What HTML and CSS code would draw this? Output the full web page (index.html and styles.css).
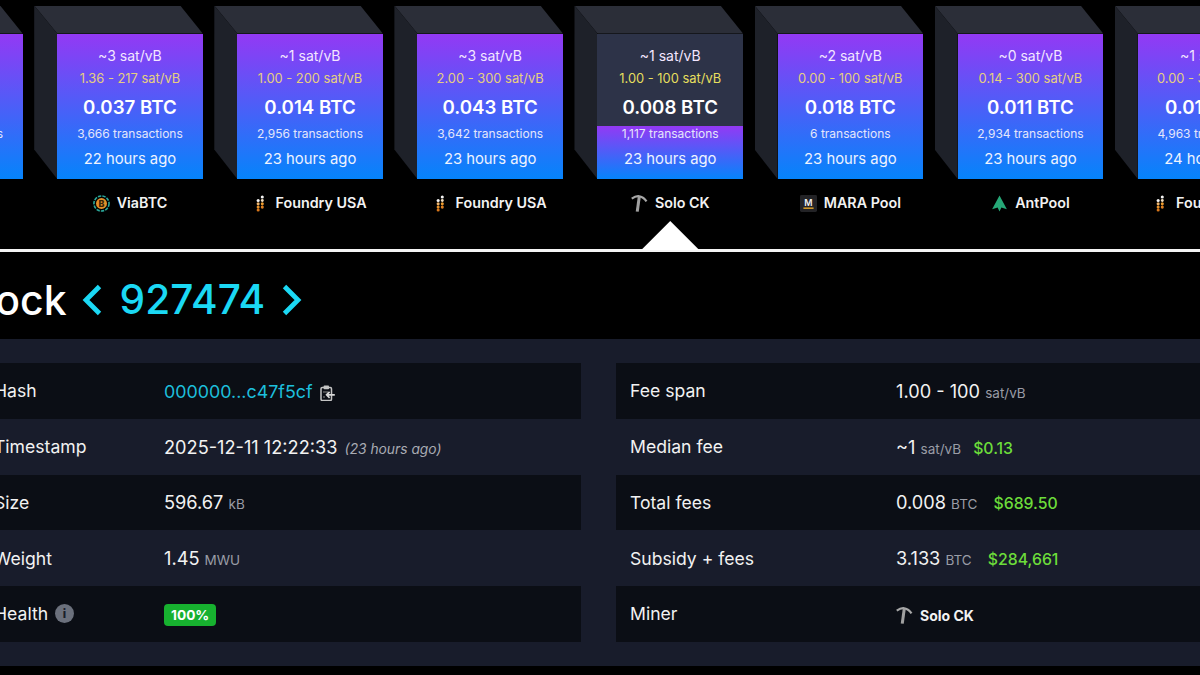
FILE: index.html
```html
<!DOCTYPE html>
<html>
<head>
  <meta charset="UTF-8">
  <title>Block 927474</title>
  <link rel="stylesheet" href="styles.css">
</head>
<body>
  <svg class="icon-defs" width="0" height="0">
    <symbol id="icon-via" viewBox="0 0 18 18">
      <circle cx="9" cy="9" r="8" fill="none" stroke="#2aa89a" stroke-width="1.7" stroke-dasharray="3.6 1.2"/>
      <circle cx="9" cy="9" r="5.8" fill="#e2902a"/>
      <text x="9" y="12.4" text-anchor="middle" class="icon-letter" fill="#3a2508">B</text>
    </symbol>
    <symbol id="icon-foundry" viewBox="0 0 10 18">
      <circle cx="7" cy="1.8" r="1.7" fill="#f4f4f4"/>
      <circle cx="2.4" cy="5.6" r="1.7" fill="#f4f4f4"/>
      <circle cx="7" cy="5.6" r="1.6" fill="#f0dcc0"/>
      <circle cx="2.4" cy="9.4" r="1.7" fill="#eab06a"/>
      <circle cx="7" cy="9.4" r="1.7" fill="#e8982e"/>
      <circle cx="2.4" cy="13" r="1.7" fill="#e8922a"/>
      <circle cx="7" cy="13" r="1.7" fill="#e08020"/>
      <circle cx="2.4" cy="16.3" r="1.7" fill="#d9761a"/>
    </symbol>
    <symbol id="icon-solo" viewBox="0 0 18 18">
      <path d="M.8 3.8C4 1.6 7 1 9 1.4 12 1.9 14.4 3.6 16.4 6.8" fill="none" stroke="#a8a8a8" stroke-width="2.3"/>
      <path d="M8.8 1.6 6.6 17.6" fill="none" stroke="#a0a0a0" stroke-width="3.2"/>
    </symbol>
    <symbol id="icon-mara" viewBox="0 0 18 18">
      <rect width="18" height="18" rx="1.5" fill="#232326"/>
      <text x="9" y="11.4" text-anchor="middle" class="icon-letter icon-thin" fill="#f2f2f2">M</text>
      <rect x="3.6" y="13.2" width="10.8" height="1.5" fill="#e3a52a"/>
    </symbol>
    <symbol id="icon-ant" viewBox="0 0 16 18">
      <path d="M8 .5 15.8 15 10 13.2 8 17.5 6 13.2 .2 15Z" fill="#26a877"/>
    </symbol>
  </svg>

  <div class="chain">
    <div class="block">
      <div class="block-front">
        <span class="fee">~2 sat/vB</span>
        <span class="span">1.00 - 99 sat/vB</span>
        <span class="reward">0.021 BTC</span>
        <span class="txs">3,204 transactions</span>
        <span class="age">22 hours ago</span>
      </div>
      <div class="pool"><svg class="logo logo-ant"><use href="#icon-ant"/></svg>AntPool</div>
    </div>
    <div class="block">
      <div class="block-front">
        <span class="fee">~3 sat/vB</span>
        <span class="span">1.36 - 217 sat/vB</span>
        <span class="reward">0.037 BTC</span>
        <span class="txs">3,666 transactions</span>
        <span class="age">22 hours ago</span>
      </div>
      <div class="pool"><svg class="logo"><use href="#icon-via"/></svg>ViaBTC</div>
    </div>
    <div class="block">
      <div class="block-front">
        <span class="fee">~1 sat/vB</span>
        <span class="span">1.00 - 200 sat/vB</span>
        <span class="reward">0.014 BTC</span>
        <span class="txs">2,956 transactions</span>
        <span class="age">23 hours ago</span>
      </div>
      <div class="pool"><svg class="logo logo-foundry"><use href="#icon-foundry"/></svg>Foundry USA</div>
    </div>
    <div class="block">
      <div class="block-front">
        <span class="fee">~3 sat/vB</span>
        <span class="span">2.00 - 300 sat/vB</span>
        <span class="reward">0.043 BTC</span>
        <span class="txs">3,642 transactions</span>
        <span class="age">23 hours ago</span>
      </div>
      <div class="pool"><svg class="logo logo-foundry"><use href="#icon-foundry"/></svg>Foundry USA</div>
    </div>
    <div class="block selected">
      <div class="block-front">
        <div class="fill" style="height: 36.5%"></div>
        <span class="fee">~1 sat/vB</span>
        <span class="span">1.00 - 100 sat/vB</span>
        <span class="reward">0.008 BTC</span>
        <span class="txs">1,117 transactions</span>
        <span class="age">23 hours ago</span>
      </div>
      <div class="pool"><svg class="logo"><use href="#icon-solo"/></svg>Solo CK</div>
    </div>
    <div class="block">
      <div class="block-front">
        <span class="fee">~2 sat/vB</span>
        <span class="span">0.00 - 100 sat/vB</span>
        <span class="reward">0.018 BTC</span>
        <span class="txs">6 transactions</span>
        <span class="age">23 hours ago</span>
      </div>
      <div class="pool"><svg class="logo"><use href="#icon-mara"/></svg>MARA Pool</div>
    </div>
    <div class="block">
      <div class="block-front">
        <span class="fee">~0 sat/vB</span>
        <span class="span">0.14 - 300 sat/vB</span>
        <span class="reward">0.011 BTC</span>
        <span class="txs">2,934 transactions</span>
        <span class="age">23 hours ago</span>
      </div>
      <div class="pool"><svg class="logo logo-ant"><use href="#icon-ant"/></svg>AntPool</div>
    </div>
    <div class="block">
      <div class="block-front">
        <span class="fee">~1 sat/vB</span>
        <span class="span">0.00 - 300 sat/vB</span>
        <span class="reward">0.016 BTC</span>
        <span class="txs">4,963 transactions</span>
        <span class="age">24 hours ago</span>
      </div>
      <div class="pool"><svg class="logo logo-foundry"><use href="#icon-foundry"/></svg>Foundry USA</div>
    </div>
  </div>

  <div class="title">
    <h1>Block</h1>
    <svg class="chevron" viewBox="0 0 20 32"><path d="M17.5 2.5 4 16l13.5 13.5"/></svg>
    <span class="height">927474</span>
    <svg class="chevron" viewBox="0 0 20 32"><path d="M2.5 2.5 16 16 2.5 29.5"/></svg>
  </div>

  <div class="panel">
    <div class="tables">
      <div class="table table-left">
        <div class="row">
          <div class="label">Hash</div>
          <div class="value">
            <span class="link">000000...c47f5cf</span>
            <svg class="clip" viewBox="0 0 15 16">
              <rect x="1" y="2.5" width="10.5" height="13" rx="1.2" fill="none" stroke="#c4c4c4" stroke-width="1.5"/>
              <rect x="3.6" y=".6" width="5.4" height="3.6" rx=".8" fill="#c4c4c4"/>
              <path d="M3 7h5M3 12h2" stroke="#8a8a8a" stroke-width="1"/>
              <path d="M14.8 9.8H6.6M9.6 6.8l-3 3 3 3" fill="none" stroke="#d8d8d8" stroke-width="1.7"/>
            </svg>
          </div>
        </div>
        <div class="row">
          <div class="label">Timestamp</div>
          <div class="value">2025-12-11 12:22:33 <i class="ago">(23 hours ago)</i></div>
        </div>
        <div class="row">
          <div class="label">Size</div>
          <div class="value">596.67 <span class="unit">kB</span></div>
        </div>
        <div class="row">
          <div class="label">Weight</div>
          <div class="value">1.45 <span class="unit">MWU</span></div>
        </div>
        <div class="row">
          <div class="label">Health <span class="info">i</span></div>
          <div class="value"><span class="badge">100%</span></div>
        </div>
      </div>
      <div class="table">
        <div class="row">
          <div class="label">Fee span</div>
          <div class="value">1.00 - 100 <span class="unit">sat/vB</span></div>
        </div>
        <div class="row">
          <div class="label">Median fee</div>
          <div class="value">~1 <span class="unit">sat/vB</span> <span class="fiat">$0.13</span></div>
        </div>
        <div class="row">
          <div class="label">Total fees</div>
          <div class="value">0.008 <span class="unit">BTC</span> <span class="fiat wide">$689.50</span></div>
        </div>
        <div class="row">
          <div class="label">Subsidy + fees</div>
          <div class="value">3.133 <span class="unit">BTC</span> <span class="fiat wide">$284,661</span></div>
        </div>
        <div class="row">
          <div class="label">Miner</div>
          <div class="value miner"><svg class="logo"><use href="#icon-solo"/></svg>Solo CK</div>
        </div>
      </div>
    </div>
  </div>
</body>
</html>
```

FILE: styles.css
```css
html, body {
  margin: 0;
  height: 100%;
}

body {
  width: 1200px;
  height: 675px;
  overflow: hidden;
  background: #000;
  color: #fff;
  font-family: Inter, "Liberation Sans", sans-serif;
}

.icon-defs {
  position: absolute;
}

.icon-letter {
  font-size: 9.5px;
  font-weight: 800;
  font-family: Inter, sans-serif;
}

.icon-thin {
  font-weight: 600;
}

/* block chain strip */
.chain {
  display: flex;
  gap: 34.6px;
  height: 215.5px;
  padding: 33.5px 0 0;
  margin-left: -122.9px;
  border-bottom: 3px solid #f4f4f4;
}

.block {
  position: relative;
  flex: 0 0 145.5px;
  width: 145.5px;
}

.block-front {
  position: relative;
  height: 145.5px;
  display: flex;
  flex-direction: column;
  align-items: center;
  background: linear-gradient(#9339f4, #0584fb);
  white-space: nowrap;
}

.block-front::before {
  content: "";
  position: absolute;
  left: -23px;
  top: -28px;
  width: 168.5px;
  height: 28px;
  background: #2b2e38;
  clip-path: polygon(0 0, 146px 0, 100% 100%, 23px 100%);
}

.block-front::after {
  content: "";
  position: absolute;
  left: -23px;
  top: -28px;
  width: 23px;
  height: 173.5px;
  background: #1e2129;
  clip-path: polygon(0 0, 100% 28px, 100% 100%, 0 144px);
}

.block-front span {
  position: relative;
  text-align: center;
}

.selected .block-front {
  background: #2d3348;
}

.fill {
  position: absolute;
  left: 0;
  right: 0;
  bottom: 0;
  background: linear-gradient(#9339f4, #0584fb);
}

.fee {
  margin-top: 13px;
  font-size: 14px;
  line-height: 17px;
  color: #f3e6ff;
}

.span {
  margin-top: 7.5px;
  font-size: 12.9px;
  line-height: 15px;
  color: #e6cf80;
}

.selected .span {
  color: #e6df5e;
}

.reward {
  margin-top: 10.5px;
  font-size: 18.7px;
  line-height: 22px;
  font-weight: 600;
}

.txs {
  margin-top: 8px;
  font-size: 12px;
  line-height: 14px;
  color: #e4e6fb;
}

.age {
  margin-top: 9px;
  font-size: 14.8px;
  line-height: 18px;
  color: #eef3ff;
}

.pool {
  display: flex;
  align-items: center;
  justify-content: center;
  gap: 7px;
  margin-top: 15px;
  font-size: 14.3px;
  line-height: 18px;
  font-weight: 600;
  color: #f2f2f2;
  white-space: nowrap;
}

.logo {
  width: 17px;
  height: 17px;
  flex: none;
}

.logo-foundry {
  width: 9px;
  margin: 0 4px 0 2px;
}

.selected::after {
  content: "";
  position: absolute;
  left: 43.75px;
  bottom: -1px;
  width: 58px;
  height: 29px;
  background: #fff;
  clip-path: polygon(50% 0, 100% 100%, 0 100%);
}

/* title */
.title {
  display: flex;
  align-items: center;
  gap: 16px;
  box-sizing: border-box;
  height: 87px;
  padding-top: 8px;
  margin-left: -42px;
}

h1 {
  margin: 0 -1px 0 0;
  font-size: 41px;
  font-weight: 500;
}

.chevron {
  width: 20px;
  height: 32px;
  fill: none;
  stroke: #1bd8f4;
  stroke-width: 4.8;
}

.height {
  margin: 0 1px 0 2px;
  font-size: 40.6px;
  font-weight: 450;
  color: #1bd8f4;
}

/* details */
.panel {
  height: 278.75px;
  padding: 24px 0;
  background: #181c2b;
}

.tables {
  display: grid;
  grid-template-columns: 600px 697px;
  gap: 35px;
  margin-left: -19px;
}

.row {
  display: flex;
  align-items: center;
  height: 55.75px;
  padding-left: 14px;
  font-size: 17.6px;
  color: #f2f2f2;
}

.row:nth-child(odd) {
  background: #0b0e15;
}

.label {
  display: flex;
  align-items: center;
  gap: 7px;
  width: 266px;
  flex: none;
}

.table-left .row {
  padding-left: 13px;
}

.table-left .label {
  width: 170px;
}

.value {
  font-size: 18.2px;
  white-space: nowrap;
}

.link {
  font-size: 17.85px;
  color: #1dbfdc;
}

.clip {
  width: 15px;
  height: 16px;
  margin-left: 2px;
  vertical-align: -3px;
}

.unit {
  font-size: 13.5px;
  color: #9a9ca6;
}

.ago {
  margin-left: 2px;
  font-size: 13.8px;
  color: #a9abb3;
}

.fiat {
  margin-left: 7px;
  font-size: 15.8px;
  font-weight: 500;
  color: #6cdc3a;
}

.fiat.wide {
  margin-left: 11px;
}

.info {
  display: flex;
  align-items: center;
  justify-content: center;
  width: 19px;
  height: 19px;
  border-radius: 50%;
  background: #6b707c;
  font-size: 12px;
  font-weight: 800;
  color: #1b1e2a;
}

.badge {
  display: inline-block;
  margin-top: 3px;
  padding: 0 7px;
  height: 22px;
  line-height: 22px;
  border-radius: 4px;
  background: #17b12f;
  font-size: 13.7px;
  font-weight: 700;
  color: #fff;
}

.miner {
  display: flex;
  align-items: center;
  gap: 7px;
  margin-top: 3px;
  font-size: 14px;
  font-weight: 700;
}
```
